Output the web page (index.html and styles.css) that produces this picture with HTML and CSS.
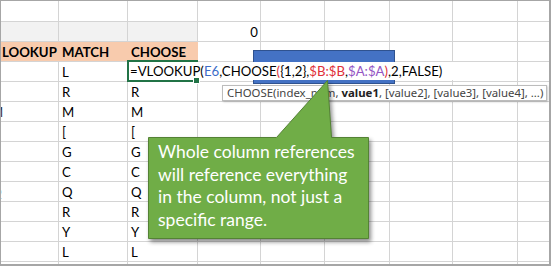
FILE: index.html
```html
<!DOCTYPE html>
<html lang="en">

<head>
    <meta charset="UTF-8">
    <title>CHOOSE in VLOOKUP</title>
    <link rel="stylesheet" href="styles.css">
</head>

<body>

    <div class="frame">
        <div class="sheet">
            <!-- row 1 -->
            <div></div><div></div><div></div><div></div><div></div><div></div><div></div><div></div><div></div>
            <!-- row 2 -->
            <div class="shade"></div><div class="shade"></div><div class="shade"></div>
            <div class="num">0</div><div></div><div></div><div></div><div></div><div></div>
            <!-- row 3: headers -->
            <div class="head first">LOOKUP</div><div class="head">MATCH</div><div class="head">CHOOSE</div>
            <div></div><div></div><div></div><div></div><div></div><div></div>
            <!-- row 4 -->
            <div></div><div>L</div><div></div><div></div><div></div><div></div><div></div><div></div><div></div>
            <!-- rows 5-13 -->
            <div></div><div>R</div><div>R</div><div></div><div></div><div></div><div></div><div></div><div></div>
            <div class="cut">M</div><div>M</div><div>M</div><div></div><div></div><div></div><div></div><div></div><div></div>
            <div></div><div>[</div><div>[</div><div></div><div></div><div></div><div></div><div></div><div></div>
            <div></div><div>G</div><div>G</div><div></div><div></div><div></div><div></div><div></div><div></div>
            <div></div><div>C</div><div>C</div><div></div><div></div><div></div><div></div><div></div><div></div>
            <div class="cut">Q</div><div>Q</div><div>Q</div><div></div><div></div><div></div><div></div><div></div><div></div>
            <div></div><div>R</div><div>R</div><div></div><div></div><div></div><div></div><div></div><div></div>
            <div></div><div>Y</div><div>Y</div><div></div><div></div><div></div><div></div><div></div><div></div>
            <div></div><div>L</div><div>L</div><div></div><div></div><div></div><div></div><div></div><div></div>
            <!-- row 14 (cut off) -->
            <div></div><div></div><div></div><div></div><div></div><div></div><div></div><div></div><div></div>
        </div>

        <div class="bar"></div>

        <div class="editor">=VLOOKUP(<span class="ref-blue">E6</span>,CHOOSE<span class="ref-red">(</span>{1,2},<span class="ref-red">$B:$B</span>,<span class="ref-purple">$A:$A</span><span class="ref-red">)</span>,2,FALSE)</div>
        <div class="active"></div>
        <div class="handle"></div>

        <div class="tooltip">CHOOSE(index_num, <b>value1</b>, [value2], [value3], [value4], ...)</div>

        <div class="callout">
            <svg width="226" height="162" viewBox="0 0 226 162">
                <polygon points="1.5,58.5 129.5,58.5 180.5,1.5 184.5,58.5 221.5,58.5 221.5,159.5 1.5,159.5"
                    fill="#70ad47" stroke="#548235" stroke-width="1" />
            </svg>
            <div class="callout-text">
                Whole column references<br>
                will reference everything<br>
                in the column, not just a<br>
                specific range.
            </div>
        </div>
    </div>

</body>

</html>
```

FILE: styles.css
```css
* {
    box-sizing: border-box;
}

html,
body {
    margin: 0;
}

body {
    width: 551px;
    height: 266px;
    overflow: hidden;
    background: #fff;
    font-family: Lato, "Liberation Sans", sans-serif;
}

.frame {
    position: relative;
    width: 551px;
    height: 266px;
    border-style: solid;
    border-color: #a6a6a6;
    border-width: 1px 2px 2px 1px;
}

/* the worksheet: gaps show the gridlines */
.sheet {
    display: grid;
    grid-template-columns: 57px 68px 69px 62px 63px 64px 62px 64px 31px;
    grid-template-rows: 20px repeat(12, 19px) 2px;
    gap: 1px;
    height: 100%;
    background: #d4d4d4;
}

.sheet > div {
    background: #fff;
    color: #000;
    font-size: 13.2px;
    line-height: 20px;
    padding-left: 3px;
    white-space: nowrap;
    overflow: hidden;
}

.sheet > .shade {
    background: #f2f2f2;
}

.sheet > .head {
    background: #f8cbad;
    font-weight: bold;
    box-shadow: 1px 0 0 #f8cbad;
}

.sheet > .first {
    padding-left: 1px;
}

.sheet > .num {
    text-align: right;
    padding-right: 2px;
}

/* text spilling in from the column left of A */
.sheet > .cut {
    text-indent: -10px;
    padding-left: 0;
    color: #333;
}

/* chart shape behind the cell editor */
.bar {
    position: absolute;
    left: 252px;
    top: 49px;
    width: 142px;
    height: 34px;
    background: #4472c4;
    border: 1px solid #2f528f;
}

.editor {
    position: absolute;
    left: 128px;
    top: 61px;
    width: 388px;
    height: 18px;
    padding-left: 1px;
    background: #fff;
    font-size: 13.2px;
    line-height: 19px;
    white-space: nowrap;
}

.ref-blue {
    color: #3b6cc7;
}

.ref-red {
    color: #e0303a;
}

.ref-purple {
    color: #9455c4;
}

.active {
    position: absolute;
    left: 126px;
    top: 59px;
    width: 71px;
    height: 22px;
    border: 2px solid #217346;
    border-right: 0;
}

.handle {
    position: absolute;
    left: 192px;
    top: 76px;
    width: 7px;
    height: 7px;
    background: #217346;
    border: 1px solid #fff;
}

.tooltip {
    position: absolute;
    left: 221px;
    top: 84px;
    width: 325px;
    height: 16px;
    padding-left: 4px;
    background: #fff;
    border: 1px solid #bcbcbc;
    box-shadow: 1px 1px 2px rgba(0, 0, 0, 0.2);
    color: #444;
    font-family: "Noto Sans", sans-serif;
    font-size: 11.4px;
    line-height: 14px;
    white-space: nowrap;
}

.tooltip b {
    color: #222;
}

.callout {
    position: absolute;
    left: 146px;
    top: 78px;
    width: 226px;
    height: 162px;
}

.callout svg {
    position: absolute;
    left: 0;
    top: 0;
    overflow: visible;
    filter: drop-shadow(2px 3px 2px rgba(0, 0, 0, 0.45));
}

.callout-text {
    position: relative;
    padding: 62px 0 0 11px;
    color: #fff;
    font-size: 17.5px;
    line-height: 22.7px;
    white-space: nowrap;
}
```
